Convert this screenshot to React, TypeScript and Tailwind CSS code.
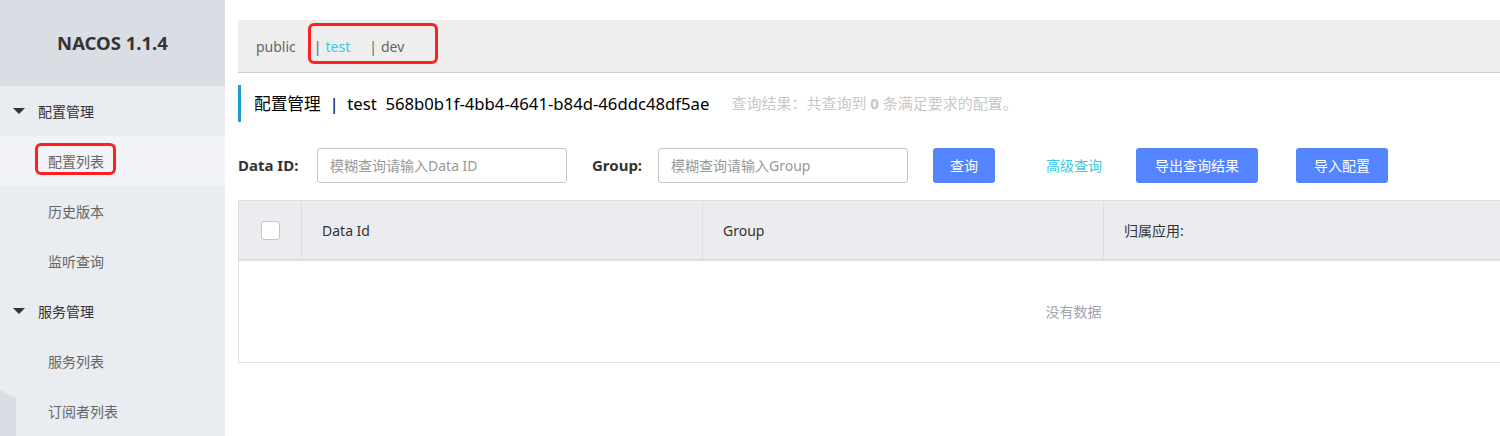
const font = 'font-["Noto_Sans","Noto_Sans_CJK_SC",sans-serif]';

const menu = [
  { title: '配置管理', items: ['配置列表', '历史版本', '监听查询'] },
  { title: '服务管理', items: ['服务列表', '订阅者列表'] },
];

function Sidebar() {
  return (
    <aside className="relative w-[225px] shrink-0 h-full bg-[#e9ecf1]">
      <div className="h-[86px] bg-[#d9dde4] flex items-center justify-center">
        <span className="text-[18.5px] font-bold text-[#333]">NACOS 1.1.4</span>
      </div>
      {menu.map((group) => (
        <div key={group.title}>
          <div className="h-[50px] flex items-center text-[14px] text-[#333]">
            <svg width="12" height="6" viewBox="0 0 12 6" className="ml-[13px] mr-[13px]">
              <polygon points="0,0 12,0 6,6" fill="#333" />
            </svg>
            {group.title}
          </div>
          {group.items.map((item) => (
            <div
              key={item}
              className={`relative h-[50px] flex items-center pl-[48px] text-[14px] text-[#666] ${
                item === '配置列表' ? 'bg-[#f2f3f6]' : ''
              }`}
            >
              {item}
              {item === '配置列表' && (
                <div className="absolute left-[35px] top-[7px] w-[81px] h-[32px] border-[3px] border-[#ff1f1f] rounded-[6px]" />
              )}
            </div>
          ))}
        </div>
      ))}
      {/* edge of the collapse handle peeking out */}
      <svg width="16" height="46" viewBox="0 0 16 46" className="absolute left-0 bottom-0">
        <polygon points="0,0 16,8 16,46 0,46" fill="#d9dde4" />
      </svg>
    </aside>
  );
}

function NamespaceBar() {
  return (
    <div className="relative h-[53px] bg-[#eeeeee] border-b border-[#cccccc] flex items-center pl-[18px] text-[14px] text-[#666]">
      <span>public</span>
      <span className="ml-[18px]">|</span>
      <span className="ml-[4px] text-[#33cde5]">test</span>
      <span className="ml-[19px]">|</span>
      <span className="ml-[4px]">dev</span>
      <div className="absolute left-[70px] top-[3px] w-[130px] h-[41px] border-[3px] border-[#ff1f1f] rounded-[6px]" />
    </div>
  );
}

function SearchBar() {
  return (
    <div className="mt-[26px] h-[35px] flex items-center text-[14px]">
      <label className="w-[79px] text-[15px] font-bold text-[#333]">Data ID:</label>
      <div className="w-[250px] h-[35px] border border-[#c4c6cf] rounded-[3px] flex items-center px-[12px] text-[#999]">
        模糊查询请输入Data ID
      </div>
      <label className="ml-[25px] w-[66px] text-[15px] font-bold text-[#333]">Group:</label>
      <div className="w-[250px] h-[35px] border border-[#c4c6cf] rounded-[3px] flex items-center px-[12px] text-[#999]">
        模糊查询请输入Group
      </div>
      <button className="ml-[25px] w-[62px] h-[35px] rounded-[3px] bg-[#5584ff] text-white">查询</button>
      <span className="ml-[51px] text-[#33cde5]">高级查询</span>
      <button className="ml-[34px] w-[122px] h-[35px] rounded-[3px] bg-[#5584ff] text-white">导出查询结果</button>
      <button className="ml-[38px] w-[92px] h-[35px] rounded-[3px] bg-[#5584ff] text-white">导入配置</button>
    </div>
  );
}

function ConfigTable() {
  return (
    <div className="mt-[17px] border-l border-t border-b border-[#dcdee3] text-[14px]">
      <div className="h-[60px] bg-[#ebecf0] border-b-2 border-[#dcdee3] flex text-[#333]">
        <div className="w-[63px] flex items-center justify-center border-r border-[#dcdee3]">
          <div className="w-[19px] h-[19px] bg-white border border-[#c4c6cf] rounded-[3px]" />
        </div>
        <div className="w-[401px] flex items-center pl-[20px] border-r border-[#dcdee3]">Data Id</div>
        <div className="w-[401px] flex items-center pl-[20px] border-r border-[#dcdee3]">Group</div>
        <div className="flex-1 flex items-center pl-[20px]">归属应用:</div>
      </div>
      <div className="h-[101px] flex items-center justify-center text-[#a0a2ad]">没有数据</div>
    </div>
  );
}

export default function App() {
  return (
    <div className={`${font} flex w-[1500px] h-[436px] overflow-hidden bg-white`}>
      <Sidebar />
      <main className="flex-1 min-w-0 overflow-hidden pl-[13px] pt-[20px]">
        <div className="w-[1670px]">
          <NamespaceBar />
          <div className="mt-[12px] h-[37px] border-l-[3px] border-[#199dd8] flex items-center pl-[13px]">
            <span className="text-[16.7px] text-[#000]">配置管理 &nbsp;|&nbsp; test&nbsp; 568b0b1f-4bb4-4641-b84d-46ddc48df5ae</span>
            <span className="ml-[22px] text-[15px] text-[#c8c8c8]">
              查询结果：共查询到 <strong className="font-bold">0</strong> 条满足要求的配置。
            </span>
          </div>
          <SearchBar />
          <ConfigTable />
        </div>
      </main>
    </div>
  );
}
